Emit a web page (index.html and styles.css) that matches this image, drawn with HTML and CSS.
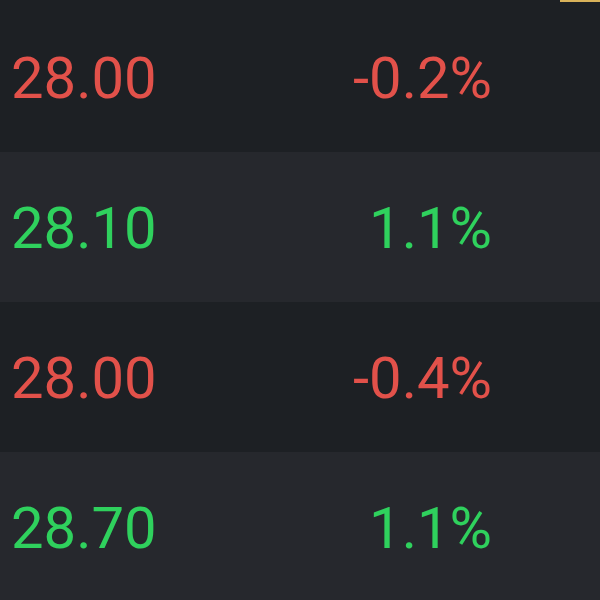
FILE: index.html
```html
<!DOCTYPE html>
<html lang="en">
  <head>
    <meta charset="UTF-8" />
    <meta name="viewport" content="width=device-width, initial-scale=1.0" />
    <title>Quotes</title>
    <link rel="stylesheet" href="styles.css">
  </head>
  <body>
    <!-- Tab indicator -->
    <div class="tab-bar">
      <div class="tab-indicator"></div>
    </div>

    <!-- Quote rows -->
    <div class="quote-list">
      <div class="quote-row">
        <p class="price down">28.00</p>
        <p class="change down">-0.2%</p>
      </div>
      <div class="quote-row">
        <p class="price up">28.10</p>
        <p class="change up">1.1%</p>
      </div>
      <div class="quote-row">
        <p class="price down">28.00</p>
        <p class="change down">-0.4%</p>
      </div>
      <div class="quote-row">
        <p class="price up">28.70</p>
        <p class="change up">1.1%</p>
      </div>
    </div>
  </body>
</html>
```

FILE: styles.css
```css
* {
  margin: 0;
  padding: 0;
  box-sizing: border-box;
}
body {
  margin: 0;
  padding: 0;
  font-family: Roboto, "Liberation Sans", sans-serif;
  background-color: #1d2024;
  overflow: hidden;
}

.tab-bar {
  height: 2px;
  display: flex;
  justify-content: flex-end;
  background-color: #1d2024;
}

.tab-indicator {
  width: 40px;
  height: 2px;
  background-color: #d8b25a;
}

.quote-row {
  height: 150px;
  display: grid;
  grid-template-columns: 1fr 1fr;
  align-items: center;
  padding: 2px 108px 0 11px;
  background-color: #1d2024;
}

.quote-row:nth-child(even) {
  background-color: #26282d;
}

.price,
.change {
  font-size: 58px;
  font-weight: 400;
}

.change {
  text-align: right;
}

.down {
  color: #e2514a; /* Colors.red */
}

.up {
  color: #2fd15d; /* Colors.green */
}
```
